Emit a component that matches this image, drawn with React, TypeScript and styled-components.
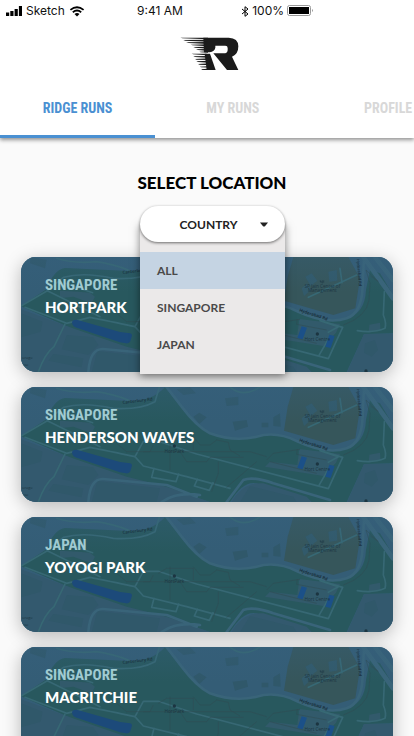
import React, { useState } from "react";
import styled, { createGlobalStyle } from "styled-components";

const display = `"Futura", "Lato", "Open Sans", sans-serif`;
const condensed = `"Futura Condensed", "Roboto Condensed", "Liberation Sans Narrow", "Open Sans", sans-serif`;
const system = `"Inter", "Roboto", sans-serif`;

const GlobalStyle = createGlobalStyle`
  *, *::before, *::after { box-sizing: border-box; }
  body { margin: 0; background: #fafafa; }
  button, select { font: inherit; }
`;

const Screen = styled.div`
  display: flex;
  flex-direction: column;
  height: 100vh;
  overflow: hidden;
  background: #fafafa;
  font-family: ${display};
`;

const Header = styled.header`
  position: relative;
  z-index: 2;
  flex: none;
  background: #fff;
  box-shadow: 0 2px 4px rgba(0, 0, 0, 0.42);
`;

const StatusBar = styled.div`
  display: grid;
  grid-template-columns: 1fr auto 1fr;
  align-items: center;
  max-width: 320px;
  height: 22px;
  padding: 0 6px;
  font-family: ${system};
  font-size: 12px;
  line-height: 22px;
  color: #111;
`;

const StatusGroup = styled.div<{ $end?: boolean }>`
  display: flex;
  align-items: center;
  justify-content: ${({ $end }) => ($end ? "flex-end" : "flex-start")};
  gap: ${({ $end }) => ($end ? 3 : 4)}px;
`;

const Brand = styled.div`
  display: flex;
  justify-content: center;
  padding: 15px 0 0 4px;
  height: 64px;
`;

const Tabs = styled.nav`
  display: flex;
  overflow: hidden;
`;

const Tab = styled.button<{ $active?: boolean }>`
  flex: 0 0 37.5%;
  height: 52px;
  padding: 0 0 6px;
  border: 0;
  border-bottom: 3px solid ${({ $active }) => ($active ? "#4a90d2" : "transparent")};
  background: none;
  color: ${({ $active }) => ($active ? "#4a90d2" : "#d8d8d8")};
  font-family: ${condensed};
  font-size: 14px;
  font-weight: 700;
  line-height: 20px;
  cursor: pointer;
`;

const Content = styled.main`
  flex: 1;
  min-height: 0;
  overflow-y: auto;
  scrollbar-width: none;
  padding: 33px 21px 21px;
`;

const Title = styled.h1`
  margin: 0 0 11px;
  padding-left: 10px;
  font-size: 17px;
  font-weight: 900;
  line-height: 24px;
  text-align: center;
  color: #000;
`;

const PickerRow = styled.div`
  display: flex;
  justify-content: center;
  padding-left: 11px;
  margin-bottom: 15px;
`;

const Picker = styled.div`
  position: relative;
  z-index: 1;
  width: 145px;
`;

const PickerField = styled.div`
  position: relative;
  z-index: 1;
  display: grid;
  align-items: center;
  height: 36px;
  border-radius: 18px;
  background: #fff;
  box-shadow: 0 1px 3px rgba(0, 0, 0, 0.55);

  select, svg { grid-area: 1 / 1; }
  svg { justify-self: end; margin-right: 17px; pointer-events: none; }
`;

const CountrySelect = styled.select`
  appearance: none;
  width: 100%;
  height: 36px;
  padding: 0 8px 0 0;
  border: 0;
  border-radius: 18px;
  background: transparent;
  font-size: 12px;
  font-weight: 700;
  color: #222;
  text-align: center;
  text-align-last: center;
  cursor: pointer;
`;

const Menu = styled.ul`
  position: absolute;
  top: 18px;
  left: 0;
  right: 0;
  margin: 0;
  padding: 28px 0 11px;
  list-style: none;
  background: #ebe9e9;
  box-shadow: 0 2px 8px rgba(0, 0, 0, 0.5);
`;

const MenuItem = styled.button<{ $selected: boolean }>`
  display: block;
  width: 100%;
  height: 37px;
  padding: 0 17px;
  border: 0;
  background: ${({ $selected }) => ($selected ? "#c5d4e3" : "transparent")};
  font-size: 12px;
  font-weight: 700;
  text-align: left;
  color: #4a4a4a;
  cursor: pointer;
`;

const Runs = styled.section`
  display: grid;
  gap: 15px;
`;

const Card = styled.article`
  display: grid;
  height: 115px;
  overflow: hidden;
  border-radius: 15px;
  background: #36607a;
`;

const CardShadow = styled.div`
  border-radius: 15px;
  box-shadow: 0 4px 18px rgba(0, 0, 0, 0.27);
`;

const CardMap = styled.svg`
  grid-area: 1 / 1;
  width: 100%;
  height: 115px;
`;

const CardText = styled.div`
  grid-area: 1 / 1;
  z-index: 0;
  padding: 18px 24px;
  background: linear-gradient(rgba(55, 98, 128, 0.3), rgba(45, 85, 100, 0) 30%);
`;

const Place = styled.p`
  margin: 0;
  font-family: ${condensed};
  font-size: 15px;
  font-weight: 700;
  line-height: 20px;
  color: #a0cbd2;
`;

const RunName = styled.h2`
  margin: 2px 0 0;
  font-size: 15px;
  font-weight: 900;
  line-height: 21px;
  color: #fff;
`;

function Logo() {
  return (
    <svg width="59" height="34" viewBox="26 20 177 102" role="img" aria-label="Ridge Runs">
      <g fill="#1b1b1b">
        <path d="M96 22H172Q201 23 201 48Q201 72 182 79L201 119H167L126 69H162Q169 67 169 60V53Q169 46 162 46H132V52Q130 63 115 66H98Z" />
        <path d="M100 70H116L133 119H106Z" />
        <path d="M27 22H110V27L34 24ZM36 29L110 28V34L42 31ZM44 36L110 35V41L52 38ZM58 43L110 42V48L64 45ZM66 50L110 49V55L72 52ZM74 57L110 56V62L80 59ZM84 64L110 63V67L88 66Z" />
        <path d="M61 70H106V75L66 72ZM66 78L108 77V82L71 80ZM71 86L112 84V89L76 88ZM75 93L114 91V97L80 95ZM80 101L118 99V105L85 103ZM85 109L121 107V112L90 111ZM90 117L124 114V119H92Z" />
      </g>
    </svg>
  );
}

function MapArt() {
  return (
    <CardMap viewBox="33 21 1116 345" preserveAspectRatio="xMidYMid slice" aria-hidden="true">
      <path fill="#345d76" d="M0 0H1200V400H0Z" />
      <path fill="#28585e" d="M33 168L112 116Q130 60 165 54L340 62Q420 70 465 22L510 78Q570 155 625 170Q690 187 760 164Q820 160 870 187Q950 220 1010 205Q1065 190 1068 120L1080 60L1110 70L1149 135V250L1062 252L1010 366H880L740 310Q700 300 660 366H600L420 310L300 285L40 172Z" />
      <path fill="#33596e" d="M33 178L180 232L350 290L470 320L600 366H33ZM665 366Q700 305 760 310L890 350L905 366ZM1062 252H1149V366H1012Z" />
      <path fill="#36565b" d="M850 21H1015L1050 85L1036 175L970 195L822 152L833 80Z" />
      <g fill="#30586a">
        <path d="M170 255L250 262L265 285L235 315L155 298ZM130 312L220 325L215 352L115 332ZM262 303L450 325L440 366H245ZM33 190L98 215L92 245L33 262ZM690 366L720 318L850 350L860 366ZM62 21L110 30L105 55L60 40Z" />
        <path d="M500 28L540 22L558 40L520 45ZM550 110L568 98L590 112L568 132ZM645 55L685 50V75L650 78ZM668 125L710 120L714 140L675 152ZM755 128H775V142H755ZM790 112L810 100L812 140L790 138ZM1065 280L1095 270L1104 300L1085 320L1062 308Z" />
      </g>
      <g fill="#325a6b">
        <path d="M886 80L905 70L922 92L902 108ZM955 65L980 60L982 92L958 95ZM875 115L892 100L903 120L882 138Z" />
        <path d="M868 207L990 222L978 248L940 288L765 260L780 245L862 255ZM240 128L255 140L244 160L190 140L150 145V122L205 125ZM1078 224L1110 218L1112 240L1076 248Z" />
      </g>
      <g fill="none" stroke="#396479" strokeWidth="8" strokeLinecap="round" strokeLinejoin="round">
        <path d="M470 21L515 80Q560 140 600 160Q680 190 760 165Q810 158 860 183Q950 225 1010 205Q1055 190 1058 110L1062 21" />
        <path d="M1060 21L1149 145M1095 21L1149 90" strokeWidth="14" />
        <path d="M650 366L700 300Q730 288 790 310L960 360" />
        <path d="M235 366Q240 295 280 297L470 315L560 350M455 366Q500 335 570 345" />
      </g>
      <g fill="none" stroke="#376874" strokeWidth="5" strokeLinecap="round" strokeLinejoin="round">
        <path d="M33 168L112 122L160 82Q220 65 310 85Q390 90 435 65L448 21" />
        <path d="M140 25Q190 42 260 35Q310 42 360 62" />
        <path d="M660 21Q700 55 750 21" />
        <path d="M45 172L170 220L240 202Q330 220 375 230L400 258L530 290L660 325" />
        <path d="M112 122L270 200M165 100L248 128" />
        <path d="M375 230L400 184H445L560 222L955 326L998 232L930 212L985 230L955 247" />
        <path d="M165 222L132 290Q105 310 85 366" />
        <path d="M432 265L425 292L498 305L506 282M562 298L553 318L598 331L609 308M927 316L957 264" />
        <path d="M895 142L990 98L1040 75M990 55L996 98M1042 242Q1090 250 1125 235Q1130 220 1120 195L1123 125" />
      </g>
      <g fill="none" stroke="#2f4c54" strokeWidth="2" opacity=".85">
        <path d="M320 190L350 215H420L430 195M480 170V270M400 215H720L770 230M445 190L470 175H550V210M550 170L570 195H600L620 180L655 187L660 210L690 228M510 215L530 245H590L600 232H700M625 245V280L605 335M740 245L650 322M770 240L790 220L870 208M1000 225Q1070 200 1077 150L1080 100L1068 60L1105 95L1082 78M862 207L860 223L950 240M780 245L920 280" />
      </g>
      <path fill="#1c4a7a" d="M186 218Q187 207 203 210L330 246L360 250Q368 252 365 260L361 274Q358 281 348 280L330 277L200 233Q188 230 186 218Z" />
      <path fill="#1b5088" d="M875 229L891 233L878 268L862 264ZM958 254L974 258L962 294L946 290Z" />
      <g fill="#1c3541" fontFamily="Open Sans, sans-serif" fontSize="14">
        <text x="937" y="113" textAnchor="middle">SP Jain Center of</text>
        <text x="937" y="127" textAnchor="middle">Management</text>
        <text x="493" y="218" textAnchor="middle">HortPark</text>
        <text x="922" y="272" textAnchor="middle">Hort Centre</text>
        <text x="36" y="328" fontSize="12">orage</text>
        <text x="36" y="348" fontSize="12">use</text>
        <circle cx="493" cy="198" r="5" />
        <circle cx="922" cy="252" r="5" />
        <circle cx="1068" cy="363" r="5" />
        <path d="M931 91V96H936M937 91V100M941 91V98" stroke="#1c3541" strokeWidth="2" fill="none" />
        <g fill="#142832" fontWeight="600">
          <text transform="translate(338 72) rotate(-7)" fontSize="13">Canterbury Rd</text>
          <text transform="translate(867 184) rotate(18)" fontSize="13">Hyderabad Rd</text>
          <text transform="translate(1040 27) rotate(85)" fontSize="12">Hyderabad Rd</text>
        </g>
      </g>
    </CardMap>
  );
}

const tabs = ["RIDGE RUNS", "MY RUNS", "PROFILE"];
const countries = ["ALL", "SINGAPORE", "JAPAN"];
const runs = [
  { place: "SINGAPORE", name: "HORTPARK" },
  { place: "SINGAPORE", name: "HENDERSON WAVES" },
  { place: "JAPAN", name: "YOYOGI PARK" },
  { place: "SINGAPORE", name: "MACRITCHIE" },
];

export default function App() {
  const [tab, setTab] = useState(tabs[0]);
  const [open, setOpen] = useState(true);
  const [country, setCountry] = useState("");
  const shown = runs.filter((r) => !country || country === "ALL" || r.place === country);

  return (
    <Screen>
      <GlobalStyle />
      <Header>
        <StatusBar>
          <StatusGroup>
            <svg width="16" height="10" viewBox="0 0 16 10" aria-hidden="true">
              <path d="M0 6.5h3.2V10H0zM4.3 5h3.2v5H4.3zM8.6 3h3.2v7H8.6zM12.9 0h3.1v10h-3.1z" />
            </svg>
            <span>Sketch</span>
            <svg width="16" height="11" viewBox="0 0 16 11" aria-hidden="true">
              <path d="M1.4 3.9Q8-1.4 14.6 3.9M3.8 6.2Q8 2.9 12.2 6.2" fill="none" stroke="#000" strokeWidth="1.8" />
              <path d="M5.5 8Q8 6.1 10.5 8L8 10.5z" />
            </svg>
          </StatusGroup>
          <span>9:41 AM</span>
          <StatusGroup $end>
            <svg width="8" height="11" viewBox="0 0 8 11" aria-hidden="true">
              <path d="M1 3L7 8L4 10.3V.7L7 3L1 8" fill="none" stroke="#000" />
            </svg>
            <span>100%</span>
            <svg width="27" height="12" viewBox="0 0 27 12" aria-hidden="true">
              <rect x=".5" y=".5" width="23" height="10" rx="2" fill="none" stroke="#999" />
              <rect x="2" y="2" width="20" height="7" />
              <path d="M25 4Q27 5.5 25 7z" fill="#999" />
            </svg>
          </StatusGroup>
        </StatusBar>
        <Brand><Logo /></Brand>
        <Tabs aria-label="Sections">
          {tabs.map((t) => (
            <Tab key={t} $active={t === tab} aria-current={t === tab ? "page" : undefined} onClick={() => setTab(t)}>
              {t}
            </Tab>
          ))}
        </Tabs>
      </Header>
      <Content>
        <Title>SELECT LOCATION</Title>
        <PickerRow>
          <Picker>
            <PickerField>
              <CountrySelect
                aria-label="Country"
                value={country}
                onMouseDown={(e) => {
                  e.preventDefault();
                  setOpen(!open);
                }}
                onChange={(e) => setCountry(e.target.value)}
              >
                <option value="">COUNTRY</option>
                {countries.map((c) => <option key={c}>{c}</option>)}
              </CountrySelect>
              <svg width="8" height="5" viewBox="0 0 8 5" aria-hidden="true">
                <path d="M0 .5h8L5 4.2Q4 5 3 4.2z" fill="#222" />
              </svg>
            </PickerField>
            {open && (
              <Menu>
                {countries.map((c) => (
                  <li key={c}>
                    <MenuItem
                      $selected={c === (country || "ALL")}
                      onClick={() => {
                        setCountry(c);
                        setOpen(false);
                      }}
                    >
                      {c}
                    </MenuItem>
                  </li>
                ))}
              </Menu>
            )}
          </Picker>
        </PickerRow>
        <Runs aria-label="Runs">
          {shown.map((r) => (
            <CardShadow key={r.name}>
              <Card>
                <MapArt />
                <CardText>
                  <Place>{r.place}</Place>
                  <RunName>{r.name}</RunName>
                </CardText>
              </Card>
            </CardShadow>
          ))}
        </Runs>
      </Content>
    </Screen>
  );
}
